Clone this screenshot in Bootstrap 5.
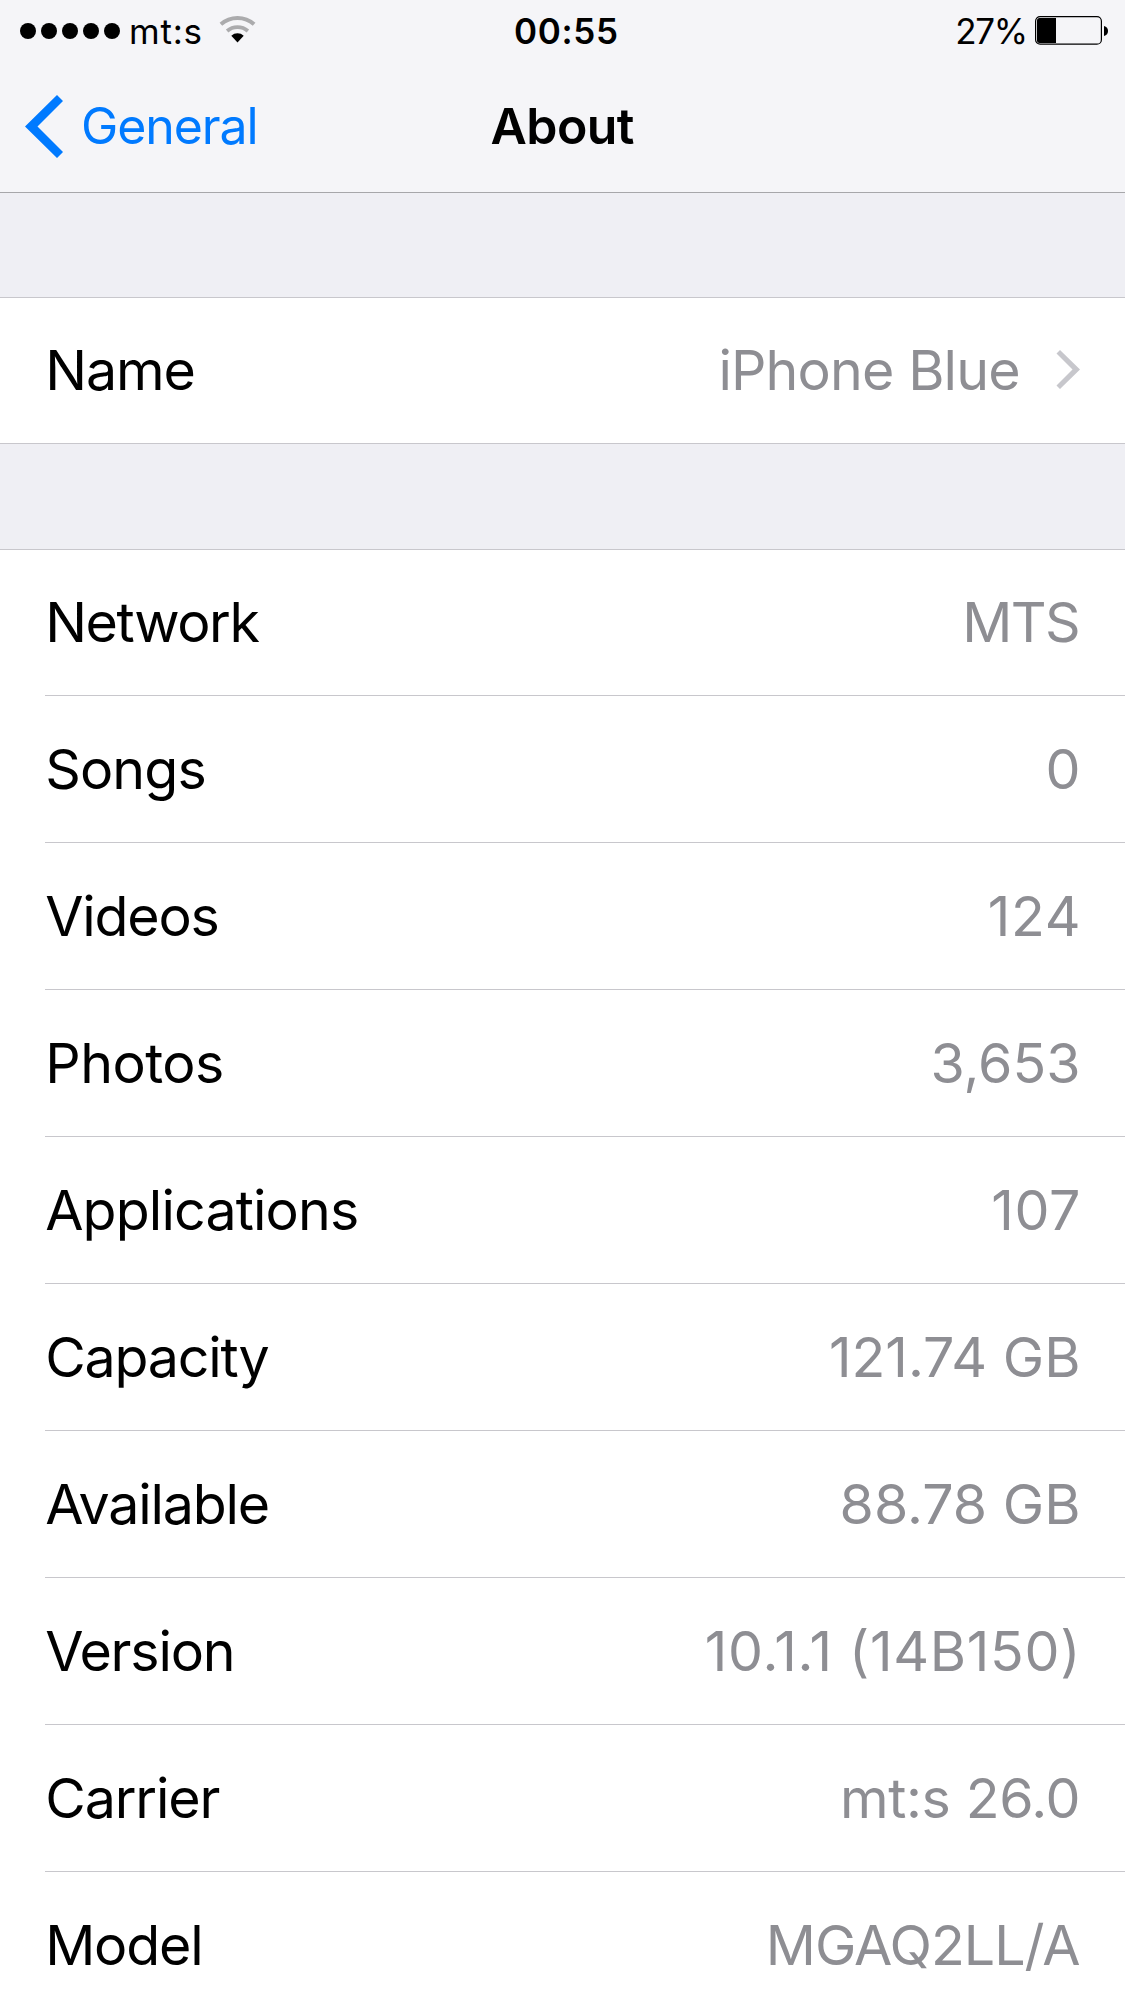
<!DOCTYPE html>
<html lang="en">
<head>
<meta charset="utf-8">
<meta name="viewport" content="width=device-width, initial-scale=1">
<title>About</title>
<link href="https://cdn.jsdelivr.net/npm/bootstrap@5.3.0/dist/css/bootstrap.min.css" rel="stylesheet">
<style>
  body { font-family: Inter, "Liberation Sans", sans-serif; line-height: normal; color: #000; background: #efeff4; overflow: hidden; height: 2001px; }
  span { white-space: nowrap; letter-spacing: var(--ls, 0); margin-right: calc(-1 * var(--ls, 0px)); }
  svg { display: block; flex: none; }
  .top-area { height: 193px; background: #f5f5f8; border-bottom: 1px solid #a7a7aa; }
  .status-line { height: 62px; font-size: 35px; }
  .title-line { height: 130px; font-size: 50px; padding-bottom: 2px; }
  .signal { margin-left: 20px; margin-right: 8px; }
  .wifi { margin-left: 17px; margin-bottom: 4px; }
  .clock { padding-left: 7px; }
  .battery { margin: 0 17px 1px 7px; }
  .back { color: #007aff; padding-left: 25px; gap: 18px; }
  .cells { background: #fff; border-top: 1px solid #c8c7cc; }
  .cells-one { border-bottom: 1px solid #c8c7cc; }
  .group-gap-a { margin-top: 104px; }
  .group-gap-b { margin-top: 105px; }
  .cell { margin-left: 45px; padding: 0 44.5px 1px .2px; height: 147px; font-size: 55.5px; border-bottom: 1px solid #c8c7cc; }
  .cell:first-child { height: 146px; padding-bottom: 2px; }
  .cells-one .cell:first-child { height: 145px; border-bottom: 0; }
  .cell:last-child { border-bottom: 0; padding-bottom: 3px; }
  .val { color: #8e8e93; }
  .disclosure { margin-left: 35px; margin-right: 1px; margin-top: 1px; }
  .k-05 { --ls: -.5px; } .k-09 { --ls: -.86px; } .k-10 { --ls: -1px; } .k-11 { --ls: -1.1px; }
  .k-12 { --ls: -1.2px; } .k-13 { --ls: -1.2px; } .k-15 { --ls: -1.4px; } .k-17 { --ls: -1.7px; }
  .k-03 { --ls: -.4px; } .k-06 { --ls: -.6px; } .w-07 { --ls: .7px; } .w-08 { --ls: .8px; }
</style>
<script src="https://cdn.jsdelivr.net/npm/bootstrap@5.3.0/dist/js/bootstrap.bundle.min.js"></script>
</head>
<body>
<header class="top-area">
  <div class="status-line row g-0 align-items-center">
    <div class="col-4 d-flex align-items-center">
      <svg class="signal" width="101" height="16" viewBox="0 0 101 16"><circle cx="8" cy="8" r="8"/><circle cx="29" cy="8" r="8"/><circle cx="50" cy="8" r="8"/><circle cx="71" cy="8" r="8"/><circle cx="92" cy="8" r="8"/></svg>
      <span class="w-08">mt:s</span>
      <svg class="wifi" width="38" height="28" viewBox="0 0 38 28"><g fill="none" stroke="#ababad"><path d="M1.9 9.3A25 25 0 0 1 35.1 9.3" stroke-width="4"/><path d="M8.1 16A16 16 0 0 1 28.9 16" stroke-width="3.8"/></g><path d="M18.5 27.5L12.3 20.7A9.2 9.2 0 0 1 24.7 20.7Z"/></svg>
    </div>
    <div class="col-4 clock text-center fw-semibold"><span class="w-07">00:55</span></div>
    <div class="col-4 d-flex align-items-center justify-content-end">
      <span class="k-15">27%</span>
      <svg class="battery" width="73" height="29" viewBox="0 0 73 29"><rect x=".6" y=".6" width="65.8" height="27.6" rx="4.5" fill="none" stroke="#000" stroke-width="1.2"/><path d="M4.5 2H21V27H4.5Q2 27 2 24.5V4.5Q2 2 4.5 2Z"/><path d="M69 10Q73 11 73 15Q73 19 69 20Z"/></svg>
    </div>
  </div>
  <nav class="title-line row g-0 align-items-center">
    <div class="col-4 d-flex align-items-center back">
      <svg width="38" height="63" viewBox="0 0 38 63"><path fill="#007aff" d="M0 31.5L32 0L38 6L12.5 31.5L38 57L32 63Z"/></svg>
      <span class="k-11">General</span>
    </div>
    <div class="col-4 text-center fw-semibold"><span class="k-06">About</span></div>
  </nav>
</header>
<main>
  <section class="cells cells-one group-gap-a">
    <div class="cell d-flex align-items-center justify-content-between">
      <span class="k-11">Name</span>
      <div class="d-flex align-items-center val"><span class="k-09">iPhone Blue</span>
        <svg class="disclosure" width="24" height="39" viewBox="0 0 24 39"><path fill="#c7c7cc" d="M4 0L.5 3.5L16.5 19.5L.5 35.5L4 39L24 19.5Z"/></svg>
      </div>
    </div>
  </section>
  <section class="cells group-gap-b">
    <div class="cell d-flex align-items-center justify-content-between"><span class="k-15">Network</span><span class="val k-17">MTS</span></div>
    <div class="cell d-flex align-items-center justify-content-between"><span class="k-09">Songs</span><span class="val">0</span></div>
    <div class="cell d-flex align-items-center justify-content-between"><span class="k-12">Videos</span><span class="val w-07">124</span></div>
    <div class="cell d-flex align-items-center justify-content-between"><span class="k-05">Photos</span><span class="val">3,653</span></div>
    <div class="cell d-flex align-items-center justify-content-between"><span class="k-09">Applications</span><span class="val w-07">107</span></div>
    <div class="cell d-flex align-items-center justify-content-between"><span class="k-12">Capacity</span><span class="val">121.74 GB</span></div>
    <div class="cell d-flex align-items-center justify-content-between"><span class="k-12">Available</span><span class="val">88.78 GB</span></div>
    <div class="cell d-flex align-items-center justify-content-between"><span class="k-12">Version</span><span class="val w-07">10.1.1 (14B150)</span></div>
    <div class="cell d-flex align-items-center justify-content-between"><span class="k-11">Carrier</span><span class="val k-03">mt:s 26.0</span></div>
    <div class="cell d-flex align-items-center justify-content-between"><span class="k-13">Model</span><span class="val k-10">MGAQ2LL/A</span></div>
  </section>
</main>
</body>
</html>
